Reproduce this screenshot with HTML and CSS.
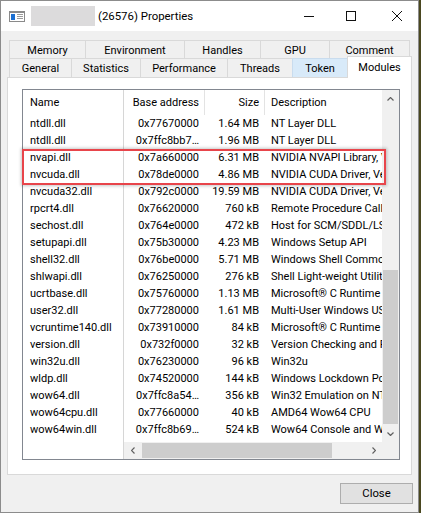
FILE: index.html
```html
<!DOCTYPE html>
<html>
<head>
<meta charset="utf-8">
<title>Properties</title>
<link rel="stylesheet" href="styles.css">
</head>
<body>
<div class="window">
  <div class="titlebar">
    <svg class="app-icon" width="16" height="11" viewBox="0 0 16 11">
      <rect x="0.5" y="0.5" width="15" height="10" fill="#fff" stroke="#8a8a8a"/>
      <rect x="1" y="1" width="14" height="1" fill="#8a8a8a"/>
      <rect x="2" y="3" width="4" height="6" fill="#1c6fd1"/>
      <rect x="8" y="3" width="6" height="1" fill="#9a9a9a"/>
      <rect x="8" y="5" width="6" height="1" fill="#9a9a9a"/>
      <rect x="8" y="7" width="6" height="1" fill="#9a9a9a"/>
    </svg>
    <span class="name-blur"></span>
    <span class="title">(26576) Properties</span>
    <div class="caption">
      <span class="cap-min"></span>
      <span class="cap-max"></span>
      <svg class="cap-close" width="10" height="10" viewBox="0 0 10 10"><path d="M0 0L10 10M10 0L0 10" stroke="#111" stroke-width="1"/></svg>
    </div>
  </div>
  <div class="client">
    <div class="tabs">
      <div class="tabrow row-back">
        <div class="tab w-memory">Memory</div>
        <div class="tab w-environment">Environment</div>
        <div class="tab w-handles">Handles</div>
        <div class="tab w-gpu">GPU</div>
        <div class="tab w-comment">Comment</div>
      </div>
      <div class="tabrow row-front">
        <div class="tab w-general">General</div>
        <div class="tab w-statistics">Statistics</div>
        <div class="tab w-performance">Performance</div>
        <div class="tab w-threads">Threads</div>
        <div class="tab w-token hot">Token</div>
        <div class="tab w-modules selected">Modules</div>
      </div>
    </div>
    <div class="panel">
      <div class="list">
        <div class="col-fixed">
          <div class="hcell">Name</div>
          <div class="cell">ntdll.dll</div>
          <div class="cell">ntdll.dll</div>
          <div class="cell">nvapi.dll</div>
          <div class="cell">nvcuda.dll</div>
          <div class="cell">nvcuda32.dll</div>
          <div class="cell">rpcrt4.dll</div>
          <div class="cell">sechost.dll</div>
          <div class="cell">setupapi.dll</div>
          <div class="cell">shell32.dll</div>
          <div class="cell">shlwapi.dll</div>
          <div class="cell">ucrtbase.dll</div>
          <div class="cell">user32.dll</div>
          <div class="cell">vcruntime140.dll</div>
          <div class="cell">version.dll</div>
          <div class="cell">win32u.dll</div>
          <div class="cell">wldp.dll</div>
          <div class="cell">wow64.dll</div>
          <div class="cell">wow64cpu.dll</div>
          <div class="cell">wow64win.dll</div>
        </div>
        <div class="cols">
          <div class="hrow">
            <div class="c-base">Base address</div>
            <div class="c-size">Size</div>
            <div class="c-desc">Description</div>
          </div>
          <div class="row"><div class="c-base">0x77670000</div><div class="c-size">1.64 MB</div><div class="c-desc">NT Layer DLL</div></div>
          <div class="row"><div class="c-base">0x7ffc8bb7…</div><div class="c-size">1.96 MB</div><div class="c-desc">NT Layer DLL</div></div>
          <div class="row"><div class="c-base">0x7a660000</div><div class="c-size">6.31 MB</div><div class="c-desc">NVIDIA NVAPI Library, Version 417.35</div></div>
          <div class="row"><div class="c-base">0x78de0000</div><div class="c-size">4.86 MB</div><div class="c-desc">NVIDIA CUDA Driver, Version 417.35</div></div>
          <div class="row"><div class="c-base">0x792c0000</div><div class="c-size">19.59 MB</div><div class="c-desc">NVIDIA CUDA Driver, Version 417.35</div></div>
          <div class="row"><div class="c-base">0x76620000</div><div class="c-size">760 kB</div><div class="c-desc">Remote Procedure Call Runtime</div></div>
          <div class="row"><div class="c-base">0x764e0000</div><div class="c-size">472 kB</div><div class="c-desc">Host for SCM/SDDL/LSA Lookup APIs</div></div>
          <div class="row"><div class="c-base">0x75b30000</div><div class="c-size">4.23 MB</div><div class="c-desc">Windows Setup API</div></div>
          <div class="row"><div class="c-base">0x76be0000</div><div class="c-size">5.71 MB</div><div class="c-desc">Windows Shell Common Dll</div></div>
          <div class="row"><div class="c-base">0x76250000</div><div class="c-size">276 kB</div><div class="c-desc">Shell Light-weight Utility Library</div></div>
          <div class="row"><div class="c-base">0x75760000</div><div class="c-size">1.13 MB</div><div class="c-desc">Microsoft® C Runtime Library</div></div>
          <div class="row"><div class="c-base">0x77280000</div><div class="c-size">1.61 MB</div><div class="c-desc">Multi-User Windows USER API Client DLL</div></div>
          <div class="row"><div class="c-base">0x73910000</div><div class="c-size">84 kB</div><div class="c-desc">Microsoft® C Runtime Library</div></div>
          <div class="row"><div class="c-base">0x732f0000</div><div class="c-size">32 kB</div><div class="c-desc">Version Checking and File Installation Libraries</div></div>
          <div class="row"><div class="c-base">0x76230000</div><div class="c-size">96 kB</div><div class="c-desc">Win32u</div></div>
          <div class="row"><div class="c-base">0x74520000</div><div class="c-size">144 kB</div><div class="c-desc">Windows Lockdown Policy</div></div>
          <div class="row"><div class="c-base">0x7ffc8a54…</div><div class="c-size">356 kB</div><div class="c-desc">Win32 Emulation on NT64</div></div>
          <div class="row"><div class="c-base">0x77660000</div><div class="c-size">40 kB</div><div class="c-desc">AMD64 Wow64 CPU</div></div>
          <div class="row"><div class="c-base">0x7ffc8b69…</div><div class="c-size">524 kB</div><div class="c-desc">Wow64 Console and Win32 API Logging</div></div>
        </div>
        <div class="vscroll">
          <div class="sb-btn"><svg width="7" height="4" viewBox="0 0 7 4"><path d="M0.5 3.5L3.5 0.5L6.5 3.5" fill="none" stroke="#606060" stroke-width="1.2"/></svg></div>
          <div class="sb-track-v"><div class="thumb-v"></div></div>
          <div class="sb-btn"><svg width="7" height="4" viewBox="0 0 7 4"><path d="M0.5 0.5L3.5 3.5L6.5 0.5" fill="none" stroke="#606060" stroke-width="1.2"/></svg></div>
        </div>
        <div class="hscroll">
          <div class="sb-btn"><svg width="4" height="7" viewBox="0 0 4 7"><path d="M3.5 0.5L0.5 3.5L3.5 6.5" fill="none" stroke="#606060" stroke-width="1.2"/></svg></div>
          <div class="sb-track-h"><div class="thumb-h"></div></div>
          <div class="sb-btn"><svg width="4" height="7" viewBox="0 0 4 7"><path d="M0.5 0.5L3.5 3.5L0.5 6.5" fill="none" stroke="#606060" stroke-width="1.2"/></svg></div>
        </div>
        <div class="corner"></div>
        <div class="highlight"></div>
      </div>
    </div>
    <div class="buttons">
      <button class="btn">Close</button>
    </div>
  </div>
</div>
</body>
</html>
```

FILE: styles.css
```css
* { box-sizing: border-box; margin: 0; padding: 0; }
html, body { width: 421px; height: 513px; overflow: hidden; }
body {
  background: #4a4820;
  font-family: Roboto, "Liberation Sans", sans-serif;
  font-size: 11px;
  color: #000;
}
.window {
  width: 419px;
  height: 513px;
  border: 1px solid #8c8c8c;
  background: #f0f0f0;
  display: flex;
  flex-direction: column;
}
.titlebar {
  height: 30px;
  flex: none;
  background: #fff;
  display: flex;
  align-items: center;
}
.app-icon { margin-left: 8px; flex: none; }
.name-blur {
  width: 64px;
  height: 20px;
  margin-left: 6px;
  background: #dcdbdc;
  flex: none;
}
.title { margin-left: 3px; font-size: 11.4px; color: #000; }
.caption {
  margin-left: auto;
  margin-right: 16px;
  display: flex;
  align-items: center;
}
.cap-min { width: 10px; height: 1px; background: #111; margin-top: 1px; }
.cap-max { width: 10px; height: 10px; border: 1px solid #111; margin-left: 32px; }
.cap-close { margin-left: 36px; display: block; }

.client { flex: 1; display: flex; flex-direction: column; }

.tabs { margin: 9px 0 0 8px; }
.tabrow { display: flex; }
.tab {
  height: 20px;
  border: 1px solid #d9d9d9;
  border-bottom: none;
  margin-left: -1px;
  background: #f0f0f0;
  display: flex;
  align-items: center;
  justify-content: center;
  white-space: nowrap;
}
.tab:first-child { margin-left: 0; }
.row-front { margin-top: -2px; height: 19px; align-items: flex-start; }
.row-front .tab { height: 19px; }
.tab.hot { background: #d8eaf9; border-color: #c9dcee; }
.tab.selected {
  background: #fff;
  height: 22px;
  margin-top: -2px;
  position: relative;
  z-index: 1;
}
.w-memory { width: 77px; }
.w-environment { width: 100px; }
.w-handles { width: 77px; }
.w-gpu { width: 70px; }
.w-comment { width: 81px; }
.w-general { width: 63px; }
.w-statistics { width: 70px; }
.w-performance { width: 88px; }
.w-threads { width: 66px; }
.w-token { width: 56px; }
.w-modules { width: 65px; }

.panel {
  margin-left: 6px;
  width: 405px;
  height: 398px;
  flex: none;
  background: #fff;
  border: 1px solid #d9d9d9;
  padding: 11px 11px 14px 14px;
}
.list {
  width: 378px;
  height: 371px;
  border: 1px solid #828790;
  background: #fff;
  display: grid;
  grid-template-columns: 101px 258px 17px;
  grid-template-rows: 352px 17px;
  position: relative;
}
.col-fixed {
  grid-column: 1;
  grid-row: 1 / 3;
  border-right: 1px solid #d6d6d6;
  overflow: hidden;
}
.hcell { height: 25px; line-height: 25px; padding-left: 7px; white-space: nowrap; }
.cell { height: 17px; line-height: 18px; padding-left: 7px; white-space: nowrap; }

.cols {
  grid-column: 2;
  grid-row: 1;
  overflow: hidden;
}
.hrow { display: flex; height: 25px; line-height: 25px; }
.row { display: flex; height: 17px; line-height: 18px; }
.c-base, .c-size, .c-desc { flex: none; white-space: nowrap; }
.c-base { width: 81px; text-align: right; padding-right: 6px; }
.c-size { width: 60px; text-align: right; padding-right: 6px; }
.c-desc { width: 220px; padding-left: 6px; }
.hrow .c-base, .hrow .c-size { border-right: 1px solid #e3e3e3; padding-right: 5px; }

.vscroll {
  grid-column: 3;
  grid-row: 1;
  background: #f0f0f0;
  display: flex;
  flex-direction: column;
}
.sb-btn {
  width: 17px;
  height: 17px;
  flex: none;
  display: flex;
  align-items: center;
  justify-content: center;
}
.sb-btn svg { display: block; }
.sb-track-v { flex: 1; }
.thumb-v { margin: 163px 1px 0 1px; height: 154px; background: #cdcdcd; }
.hscroll {
  grid-column: 2;
  grid-row: 2;
  background: #f0f0f0;
  display: flex;
}
.sb-track-h { flex: 1; }
.thumb-h { margin: 1px 0 0 1px; width: 190px; height: 15px; background: #cdcdcd; }
.corner { grid-column: 3; grid-row: 2; background: #f0f0f0; }

.highlight {
  position: absolute;
  left: -1px;
  top: 59px;
  width: 364px;
  height: 36px;
  border: 2px solid #e8454b;
  box-shadow: 0 0 3px 1px rgba(0, 0, 0, 0.22);
  pointer-events: none;
}

.buttons {
  display: flex;
  justify-content: flex-end;
  margin: 8px 5px 0 0;
}
.btn {
  width: 73px;
  height: 21px;
  border: 1px solid #adadad;
  background: #e1e1e1;
  font-family: Roboto, "Liberation Sans", sans-serif;
  font-size: 11.3px;
  color: #000;
}
```
